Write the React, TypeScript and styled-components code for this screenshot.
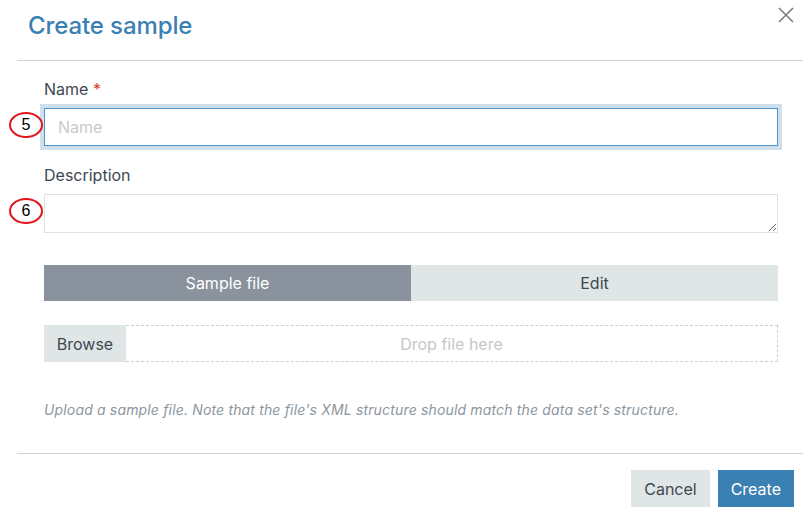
import * as React from 'react'
import styled, { createGlobalStyle } from 'styled-components'

const colors = {
  primary: '#3a80b3',
  text: '#3e4851',
  muted: '#8c96a0',
  light: '#dfe6e5',
  tabActive: '#8a939d',
  border: '#cbcfd1',
  required: '#d9442b',
}

const GlobalStyle = createGlobalStyle`
  html, body {
    margin: 0;
    padding: 0;
    background: #fff;
    font-family: Inter, "Noto Sans", sans-serif;
    color: ${colors.text};
  }
`

export default () => {
  const [tab, setTab] = React.useState<'file' | 'edit'>('file')
  return (
    <>
      <GlobalStyle />
      <Modal>
        <Header>
          <Title>Create sample</Title>
          <Close aria-label="Close">
            <svg width="16" height="16" viewBox="0 0 16 16">
              <path d="M1 1L15 15M15 1L1 15" stroke="#7d7d7d" strokeWidth="1.6" />
            </svg>
          </Close>
        </Header>
        <Body>
          <Field>
            <Label>
              Name <Required>*</Required>
            </Label>
            <Annotated>
              <Marker>5</Marker>
              <Input placeholder="Name" autoFocus />
            </Annotated>
          </Field>
          <Field>
            <Label>Description</Label>
            <Annotated>
              <Marker>6</Marker>
              <TextArea />
            </Annotated>
          </Field>
          <Tabs>
            <Tab active={tab === 'file'} onClick={() => setTab('file')}>
              Sample file
            </Tab>
            <Tab active={tab === 'edit'} onClick={() => setTab('edit')}>
              Edit
            </Tab>
          </Tabs>
          <Upload>
            <Browse>Browse</Browse>
            <Drop>Drop file here</Drop>
          </Upload>
          <Help>
            Upload a sample file. Note that the file's XML structure should match the data set's
            structure.
          </Help>
        </Body>
        <Footer>
          <Button>Cancel</Button>
          <Button primary>Create</Button>
        </Footer>
      </Modal>
    </>
  )
}

const Modal = styled.div`
  width: 786px;
  margin-left: 17px;
  height: 518px;
  display: flex;
  flex-direction: column;
`
const Header = styled.div`
  height: 61px;
  box-sizing: border-box;
  border-bottom: 1px solid #cfd2d4;
  display: flex;
  align-items: flex-start;
  justify-content: space-between;
  padding: 11px 9px 0 11px;
`
const Title = styled.h1`
  margin: 0;
  font-size: 24px;
  font-weight: 500;
  color: ${colors.primary};
  letter-spacing: -0.1px;
`
const Close = styled.button`
  background: none;
  border: 0;
  padding: 0;
  margin-top: -4px;
  cursor: pointer;
  display: flex;
`
const Body = styled.div`
  padding: 18px 25px 0 27px;
  height: 393px;
  box-sizing: border-box;
  border-bottom: 1px solid #cfd2d4;
`
const Field = styled.div`
  margin-bottom: 19px;
`
const Label = styled.div`
  font-size: 16px;
  line-height: 20px;
  margin-bottom: 9px;
  color: ${colors.text};
`
const Required = styled.span`
  color: ${colors.required};
`
const Annotated = styled.div`
  position: relative;
`
const Marker = styled.span`
  position: absolute;
  left: -35px;
  top: 4px;
  width: 30px;
  height: 22px;
  border: 2px solid #e0161b;
  border-radius: 50%;
  display: flex;
  align-items: center;
  justify-content: center;
  font-family: Arial, "Liberation Sans", sans-serif;
  font-size: 16px;
  color: #000;
  background: #fff;
`
const Input = styled.input`
  display: block;
  width: 100%;
  height: 38px;
  box-sizing: border-box;
  border: 1px solid #4a93cf;
  box-shadow: 0 0 0 4px #cfe0ec;
  outline: none;
  padding: 0 13px;
  font-family: inherit;
  font-size: 16px;
  color: ${colors.text};
  &::placeholder {
    color: #c5c9cc;
  }
`
const TextArea = styled.textarea`
  display: block;
  width: 100%;
  height: 39px;
  box-sizing: border-box;
  border: 1px solid #dde3e3;
  outline: none;
  padding: 8px 11px;
  font-family: inherit;
  font-size: 16px;
  resize: vertical;
`
const Tabs = styled.div`
  display: grid;
  grid-template-columns: 1fr 1fr;
  margin-top: 32px;
  height: 36px;
`
const Tab = styled.div<{ active?: boolean }>`
  display: flex;
  align-items: center;
  justify-content: center;
  font-size: 16px;
  cursor: pointer;
  background: ${(p) => (p.active ? colors.tabActive : colors.light)};
  color: ${(p) => (p.active ? '#fff' : colors.text)};
`
const Upload = styled.div`
  display: flex;
  height: 37px;
  margin-top: 24px;
`
const Browse = styled.div`
  width: 82px;
  background: ${colors.light};
  display: flex;
  align-items: center;
  justify-content: center;
  font-size: 16px;
  color: ${colors.text};
`
const Drop = styled.div`
  flex: 1;
  border: 1px dashed #cdd0d2;
  border-left: 0;
  display: flex;
  align-items: center;
  justify-content: center;
  font-size: 16px;
  color: #c4c8cb;
`
const Help = styled.p`
  margin: 39px 0 0;
  font-size: 14px;
  line-height: 17px;
  letter-spacing: 0.16px;
  font-style: italic;
  color: ${colors.muted};
`
const Footer = styled.div`
  display: flex;
  justify-content: flex-end;
  gap: 8px;
  padding: 16px 9px 0 0;
`
const Button = styled.button<{ primary?: boolean }>`
  height: 37px;
  padding: 0 13px;
  border: 0;
  font-family: inherit;
  font-size: 16px;
  cursor: pointer;
  background: ${(p) => (p.primary ? colors.primary : colors.light)};
  color: ${(p) => (p.primary ? '#fff' : colors.text)};
`
